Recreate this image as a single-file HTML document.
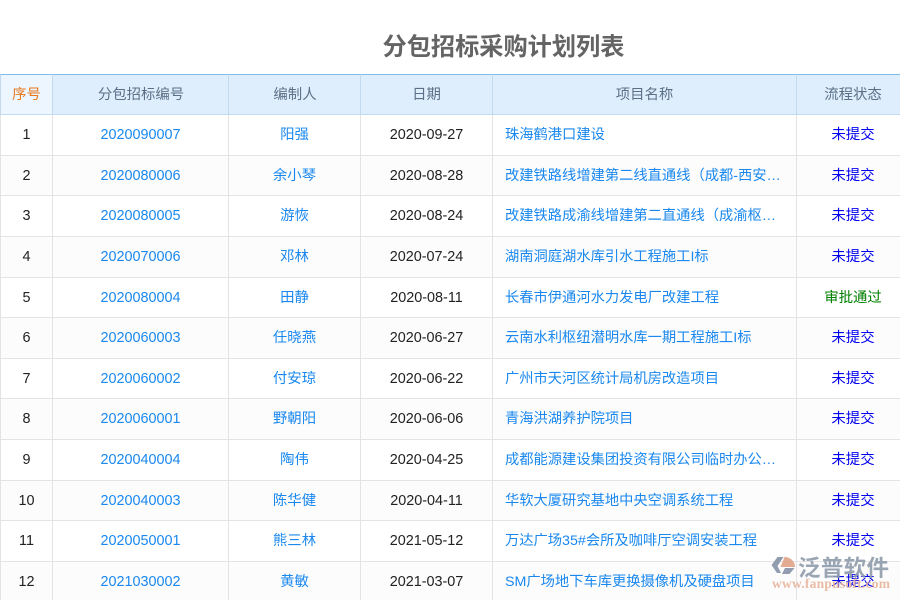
<!DOCTYPE html>
<html lang="zh">
<head>
<meta charset="utf-8">
<style>
html,body{margin:0;padding:0;width:900px;height:600px;overflow:hidden;background:#fff}
body{position:relative;font-family:"Liberation Sans","Noto Sans CJK SC",sans-serif;font-size:14.4px;line-height:20px}
.title{position:absolute;left:382.5px;top:30px;width:260px;font-size:24.2px;line-height:36px;font-weight:bold;color:#646464;white-space:nowrap}
table{position:absolute;left:0;top:74px;width:900px;border-collapse:separate;border-spacing:0;table-layout:fixed}
th,td{padding:0;text-align:center;overflow:hidden;white-space:nowrap;box-sizing:border-box;border-right:1px solid #e3e3e6;border-bottom:1px solid #e4e4e7;font-weight:normal;vertical-align:middle;line-height:20px}
th:first-child,td:first-child{border-left:1px solid #e3e3e6}
th:last-child,td:last-child{border-right:0;padding-left:9px}
thead tr{height:41px}
th{background:#deeefc;color:#5b7087;border-top:1px solid #7dbceb;border-right-color:#c2d9ee;border-bottom-color:#c2dcf3}
th:first-child{background:#edf6ff;color:#e8781c;border-left-color:#c2d9ee}
tbody tr:nth-child(even) td{background:#fcfcfd}
td{color:#222}
td.l{color:#1a88ee}
td.n{text-align:left;padding-left:12px;color:#1a88ee;font-size:14.28px}
td.n span{display:block;width:277px;overflow:hidden;text-overflow:ellipsis}
td.s{color:#0000ee}
td.g{color:#007f00}
.wm{position:absolute;left:0;top:0;width:900px;height:600px;pointer-events:none}
</style>
</head>
<body>
<div class="title">分包招标采购计划列表</div>
<table>
<colgroup><col style="width:53px"><col style="width:176px"><col style="width:132px"><col style="width:132px"><col style="width:304px"><col style="width:103px"></colgroup>
<thead><tr><th>序号</th><th style="padding-left:1px">分包招标编号</th><th style="padding-left:1px">编制人</th><th>日期</th><th>项目名称</th><th>流程状态</th></tr></thead>
<tbody>
<tr style="height:41px"><td>1</td><td class="l">2020090007</td><td class="l">阳强</td><td>2020-09-27</td><td class="n"><span>珠海鹤港口建设</span></td><td class="s">未提交</td></tr>
<tr style="height:40px"><td>2</td><td class="l">2020080006</td><td class="l">余小琴</td><td>2020-08-28</td><td class="n"><span>改建铁路线增建第二线直通线（成都-西安段）站前工程</span></td><td class="s">未提交</td></tr>
<tr style="height:41px"><td>3</td><td class="l">2020080005</td><td class="l">游恢</td><td>2020-08-24</td><td class="n"><span>改建铁路成渝线增建第二直通线（成渝枢纽段）工程</span></td><td class="s">未提交</td></tr>
<tr style="height:41px"><td>4</td><td class="l">2020070006</td><td class="l">邓林</td><td>2020-07-24</td><td class="n"><span>湖南洞庭湖水库引水工程施工I标</span></td><td class="s">未提交</td></tr>
<tr style="height:40px"><td>5</td><td class="l">2020080004</td><td class="l">田静</td><td>2020-08-11</td><td class="n"><span>长春市伊通河水力发电厂改建工程</span></td><td class="g">审批通过</td></tr>
<tr style="height:41px"><td>6</td><td class="l">2020060003</td><td class="l">任晓燕</td><td>2020-06-27</td><td class="n"><span>云南水利枢纽潜明水库一期工程施工I标</span></td><td class="s">未提交</td></tr>
<tr style="height:40px"><td>7</td><td class="l">2020060002</td><td class="l">付安琼</td><td>2020-06-22</td><td class="n"><span>广州市天河区统计局机房改造项目</span></td><td class="s">未提交</td></tr>
<tr style="height:41px"><td>8</td><td class="l">2020060001</td><td class="l">野朝阳</td><td>2020-06-06</td><td class="n"><span>青海洪湖养护院项目</span></td><td class="s">未提交</td></tr>
<tr style="height:41px"><td>9</td><td class="l">2020040004</td><td class="l">陶伟</td><td>2020-04-25</td><td class="n"><span>成都能源建设集团投资有限公司临时办公楼装修工程</span></td><td class="s">未提交</td></tr>
<tr style="height:40px"><td>10</td><td class="l">2020040003</td><td class="l">陈华健</td><td>2020-04-11</td><td class="n"><span>华软大厦研究基地中央空调系统工程</span></td><td class="s">未提交</td></tr>
<tr style="height:41px"><td>11</td><td class="l">2020050001</td><td class="l">熊三林</td><td>2021-05-12</td><td class="n"><span>万达广场35#会所及咖啡厅空调安装工程</span></td><td class="s">未提交</td></tr>
<tr style="height:41px"><td>12</td><td class="l">2021030002</td><td class="l">黄敏</td><td>2021-03-07</td><td class="n"><span>SM广场地下车库更换摄像机及硬盘项目</span></td><td class="s">未提交</td></tr>
</tbody>
</table>
<svg class="wm" viewBox="0 0 900 600" xmlns="http://www.w3.org/2000/svg">
<path d="M771.5 565 L777.5 557 L783.5 557 L777.5 566 L781 573 L777 573 Z" fill="#8b98ab" fill-opacity=".95"/>
<path d="M785 568 L794.5 568 L789.5 574 L782 574 Z" fill="#8b98ab" fill-opacity=".95"/>
<path d="M784.5 557 C790 557 795 561 795 567 L780.5 567 Z" fill="#e2a78c" fill-opacity=".95"/>
<text x="798" y="576" font-family="'Noto Sans CJK SC',sans-serif" font-size="22.5" font-weight="bold" fill="#8f9bab" fill-opacity=".9" textLength="91">泛普软件</text>
<text x="772" y="588" font-family="'Liberation Serif',serif" font-size="13.5" font-weight="bold" fill="#e8b49b" fill-opacity=".9" textLength="118">www.fanpusoft.com</text>
</svg>
</body>
</html>
